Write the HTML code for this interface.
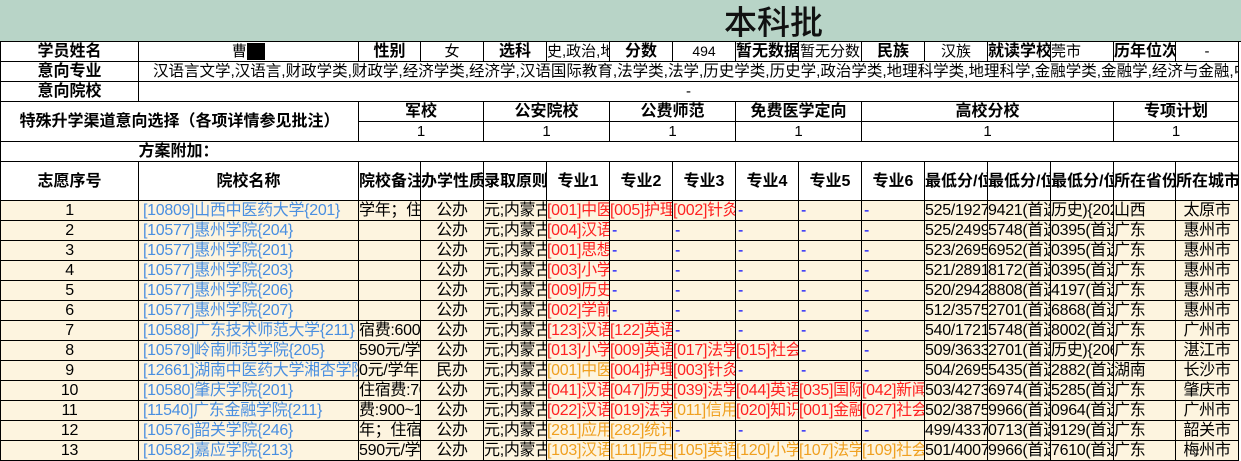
<!DOCTYPE html>
<html><head><meta charset="utf-8"><style>
body{margin:0;background:#fff;width:1241px;height:460px;overflow:hidden;font-family:"Liberation Sans","Noto Sans CJK SC",sans-serif;}
.title{position:absolute;left:0;top:0;width:1241px;height:42px;background:#b8d4c7;border-bottom:1px solid #000;box-sizing:border-box}
.title span{position:absolute;left:724px;top:-1px;font-size:33px;font-family:"Noto Sans CJK SC",sans-serif;font-weight:500;color:#111;line-height:42px}
table{position:absolute;left:0;top:41px;border-collapse:collapse;table-layout:fixed;width:1238px}
td{border:1px solid #000;padding:0;overflow:hidden;white-space:nowrap;font-size:15px;text-align:center;height:19px;line-height:19px;color:#000}
.b{font-weight:bold;font-size:16px}
.s{font-size:14px}
.l{text-align:left}
tr.d td{background:#fdf4df;height:19px;font-size:16px;letter-spacing:-0.3px}
.lk{color:#4a8fe0;text-align:left;padding-left:4px}
.rd{color:#f22;text-align:left}
.or{color:#f0a020;text-align:left}
.bl{color:#00f;text-align:left;padding-left:2px}
</style></head><body>
<div class="title"><span>本科批</span></div>
<table>
<colgroup><col style="width:138px"><col style="width:220px"><col style="width:62px"><col style="width:63px"><col style="width:63px"><col style="width:63px"><col style="width:63px"><col style="width:63px"><col style="width:63px"><col style="width:63px"><col style="width:63px"><col style="width:63px"><col style="width:63px"><col style="width:63px"><col style="width:62px"><col style="width:63px"></colgroup>
<tr><td class="b">学员姓名</td><td>曹<span style="background:#000;color:#000">■■</span></td><td class="b">性别</td><td>女</td><td class="b">选科</td><td class="l">史,政治,地</td><td class="b">分数</td><td class="s">494</td><td class="b">暂无数据</td><td>暂无分数</td><td class="b">民族</td><td>汉族</td><td class="b">就读学校</td><td class="l">莞市</td><td class="b">历年位次</td><td>-</td></tr>
<tr><td class="b">意向专业</td><td colspan="15" class="l" style="padding-left:14px;font-size:15.5px">汉语言文学,汉语言,财政学类,财政学,经济学类,经济学,汉语国际教育,法学类,法学,历史学类,历史学,政治学类,地理科学类,地理科学,金融学类,金融学,经济与金融,中医学类</td></tr>
<tr><td class="b">意向院校</td><td colspan="15">-</td></tr>
<tr><td colspan="2" rowspan="2" class="b">特殊升学渠道意向选择（各项详情参见批注）</td><td colspan="2" class="b">军校</td><td colspan="2" class="b">公安院校</td><td colspan="2" class="b">公费师范</td><td colspan="2" class="b">免费医学定向</td><td colspan="4" class="b">高校分校</td><td colspan="2" class="b">专项计划</td></tr>
<tr><td colspan="2">1</td><td colspan="2">1</td><td colspan="2">1</td><td colspan="2">1</td><td colspan="4">1</td><td colspan="2">1</td></tr>
<tr><td style="border-right:none"></td><td class="b l" style="border-left:none;border-right:none">方案附加：</td><td colspan="14" style="border-left:none"></td></tr>
<tr><td class="b" style="height:38px">志愿序号</td><td class="b">院校名称</td><td class="b l">院校备注</td><td class="b l">办学性质</td><td class="b l">录取原则</td><td class="b">专业1</td><td class="b">专业2</td><td class="b">专业3</td><td class="b">专业4</td><td class="b">专业5</td><td class="b">专业6</td><td class="b l">最低分/位</td><td class="b l">最低分/位</td><td class="b l">最低分/位</td><td class="b l">所在省份</td><td class="b l">所在城市</td></tr>
<tr class="d"><td>1</td><td class="lk">[10809]山西中医药大学{201}</td><td class="l">学年；住宿</td><td>公办</td><td class="l">元;内蒙古</td><td class="rd">[001]中医</td><td class="rd">[005]护理</td><td class="rd">[002]针灸</td><td class="bl">-</td><td class="bl">-</td><td class="bl">-</td><td class="l">525/19275</td><td class="l">9421(首选</td><td class="l">历史){202}</td><td class="l">山西</td><td>太原市</td></tr>
<tr class="d"><td>2</td><td class="lk">[10577]惠州学院{204}</td><td></td><td>公办</td><td class="l">元;内蒙古</td><td class="rd">[004]汉语</td><td class="bl">-</td><td class="bl">-</td><td class="bl">-</td><td class="bl">-</td><td class="bl">-</td><td class="l">525/24992</td><td class="l">5748(首选</td><td class="l">0395(首选</td><td class="l">广东</td><td>惠州市</td></tr>
<tr class="d"><td>3</td><td class="lk">[10577]惠州学院{201}</td><td></td><td>公办</td><td class="l">元;内蒙古</td><td class="rd">[001]思想</td><td class="bl">-</td><td class="bl">-</td><td class="bl">-</td><td class="bl">-</td><td class="bl">-</td><td class="l">523/26951</td><td class="l">6952(首选</td><td class="l">0395(首选</td><td class="l">广东</td><td>惠州市</td></tr>
<tr class="d"><td>4</td><td class="lk">[10577]惠州学院{203}</td><td></td><td>公办</td><td class="l">元;内蒙古</td><td class="rd">[003]小学</td><td class="bl">-</td><td class="bl">-</td><td class="bl">-</td><td class="bl">-</td><td class="bl">-</td><td class="l">521/28917</td><td class="l">8172(首选</td><td class="l">0395(首选</td><td class="l">广东</td><td>惠州市</td></tr>
<tr class="d"><td>5</td><td class="lk">[10577]惠州学院{206}</td><td></td><td>公办</td><td class="l">元;内蒙古</td><td class="rd">[009]历史</td><td class="bl">-</td><td class="bl">-</td><td class="bl">-</td><td class="bl">-</td><td class="bl">-</td><td class="l">520/29425</td><td class="l">8808(首选</td><td class="l">4197(首选</td><td class="l">广东</td><td>惠州市</td></tr>
<tr class="d"><td>6</td><td class="lk">[10577]惠州学院{207}</td><td></td><td>公办</td><td class="l">元;内蒙古</td><td class="rd">[002]学前</td><td class="bl">-</td><td class="bl">-</td><td class="bl">-</td><td class="bl">-</td><td class="bl">-</td><td class="l">512/35754</td><td class="l">2701(首选</td><td class="l">6868(首选</td><td class="l">广东</td><td>惠州市</td></tr>
<tr class="d"><td>7</td><td class="lk">[10588]广东技术师范大学{211}</td><td class="l">宿费:600~17</td><td>公办</td><td class="l">元;内蒙古</td><td class="rd">[123]汉语</td><td class="rd">[122]英语</td><td class="bl">-</td><td class="bl">-</td><td class="bl">-</td><td class="bl">-</td><td class="l">540/17210</td><td class="l">5748(首选</td><td class="l">8002(首选</td><td class="l">广东</td><td>广州市</td></tr>
<tr class="d"><td>8</td><td class="lk">[10579]岭南师范学院{205}</td><td class="l">590元/学年</td><td>公办</td><td class="l">元;内蒙古</td><td class="rd">[013]小学</td><td class="rd">[009]英语</td><td class="rd">[017]法学</td><td class="rd">[015]社会</td><td class="bl">-</td><td class="bl">-</td><td class="l">509/36336</td><td class="l">2701(首选</td><td class="l">历史){206}</td><td class="l">广东</td><td>湛江市</td></tr>
<tr class="d"><td>9</td><td class="lk">[12661]湖南中医药大学湘杏学院{</td><td class="l">0元/学年</td><td>民办</td><td class="l">元;内蒙古</td><td class="or">[001]中医</td><td class="rd">[004]护理</td><td class="rd">[003]针灸</td><td class="bl">-</td><td class="bl">-</td><td class="bl">-</td><td class="l">504/26951</td><td class="l">5435(首选</td><td class="l">2882(首选</td><td class="l">湖南</td><td>长沙市</td></tr>
<tr class="d"><td>10</td><td class="lk">[10580]肇庆学院{201}</td><td class="l">住宿费:700</td><td>公办</td><td class="l">元;内蒙古</td><td class="rd">[041]汉语</td><td class="rd">[047]历史</td><td class="rd">[039]法学</td><td class="rd">[044]英语</td><td class="rd">[035]国际</td><td class="rd">[042]新闻</td><td class="l">503/42735</td><td class="l">6974(首选</td><td class="l">5285(首选</td><td class="l">广东</td><td>肇庆市</td></tr>
<tr class="d"><td>11</td><td class="lk">[11540]广东金融学院{211}</td><td class="l">费:900~190</td><td>公办</td><td class="l">元;内蒙古</td><td class="rd">[022]汉语</td><td class="rd">[019]法学</td><td class="or">[011]信用</td><td class="rd">[020]知识</td><td class="rd">[001]金融</td><td class="rd">[027]社会</td><td class="l">502/38755</td><td class="l">9966(首选</td><td class="l">0964(首选</td><td class="l">广东</td><td>广州市</td></tr>
<tr class="d"><td>12</td><td class="lk">[10576]韶关学院{246}</td><td class="l">年；住宿费</td><td>公办</td><td class="l">元;内蒙古</td><td class="or">[281]应用</td><td class="or">[282]统计</td><td class="bl">-</td><td class="bl">-</td><td class="bl">-</td><td class="bl">-</td><td class="l">499/43374</td><td class="l">0713(首选</td><td class="l">9129(首选</td><td class="l">广东</td><td>韶关市</td></tr>
<tr class="d"><td>13</td><td class="lk">[10582]嘉应学院{213}</td><td class="l">590元/学年</td><td>公办</td><td class="l">元;内蒙古</td><td class="or">[103]汉语</td><td class="or">[111]历史</td><td class="or">[105]英语</td><td class="or">[120]小学</td><td class="or">[107]法学</td><td class="or">[109]社会</td><td class="l">501/40074</td><td class="l">9966(首选</td><td class="l">7610(首选</td><td class="l">广东</td><td>梅州市</td></tr>
</table>
</body></html>
